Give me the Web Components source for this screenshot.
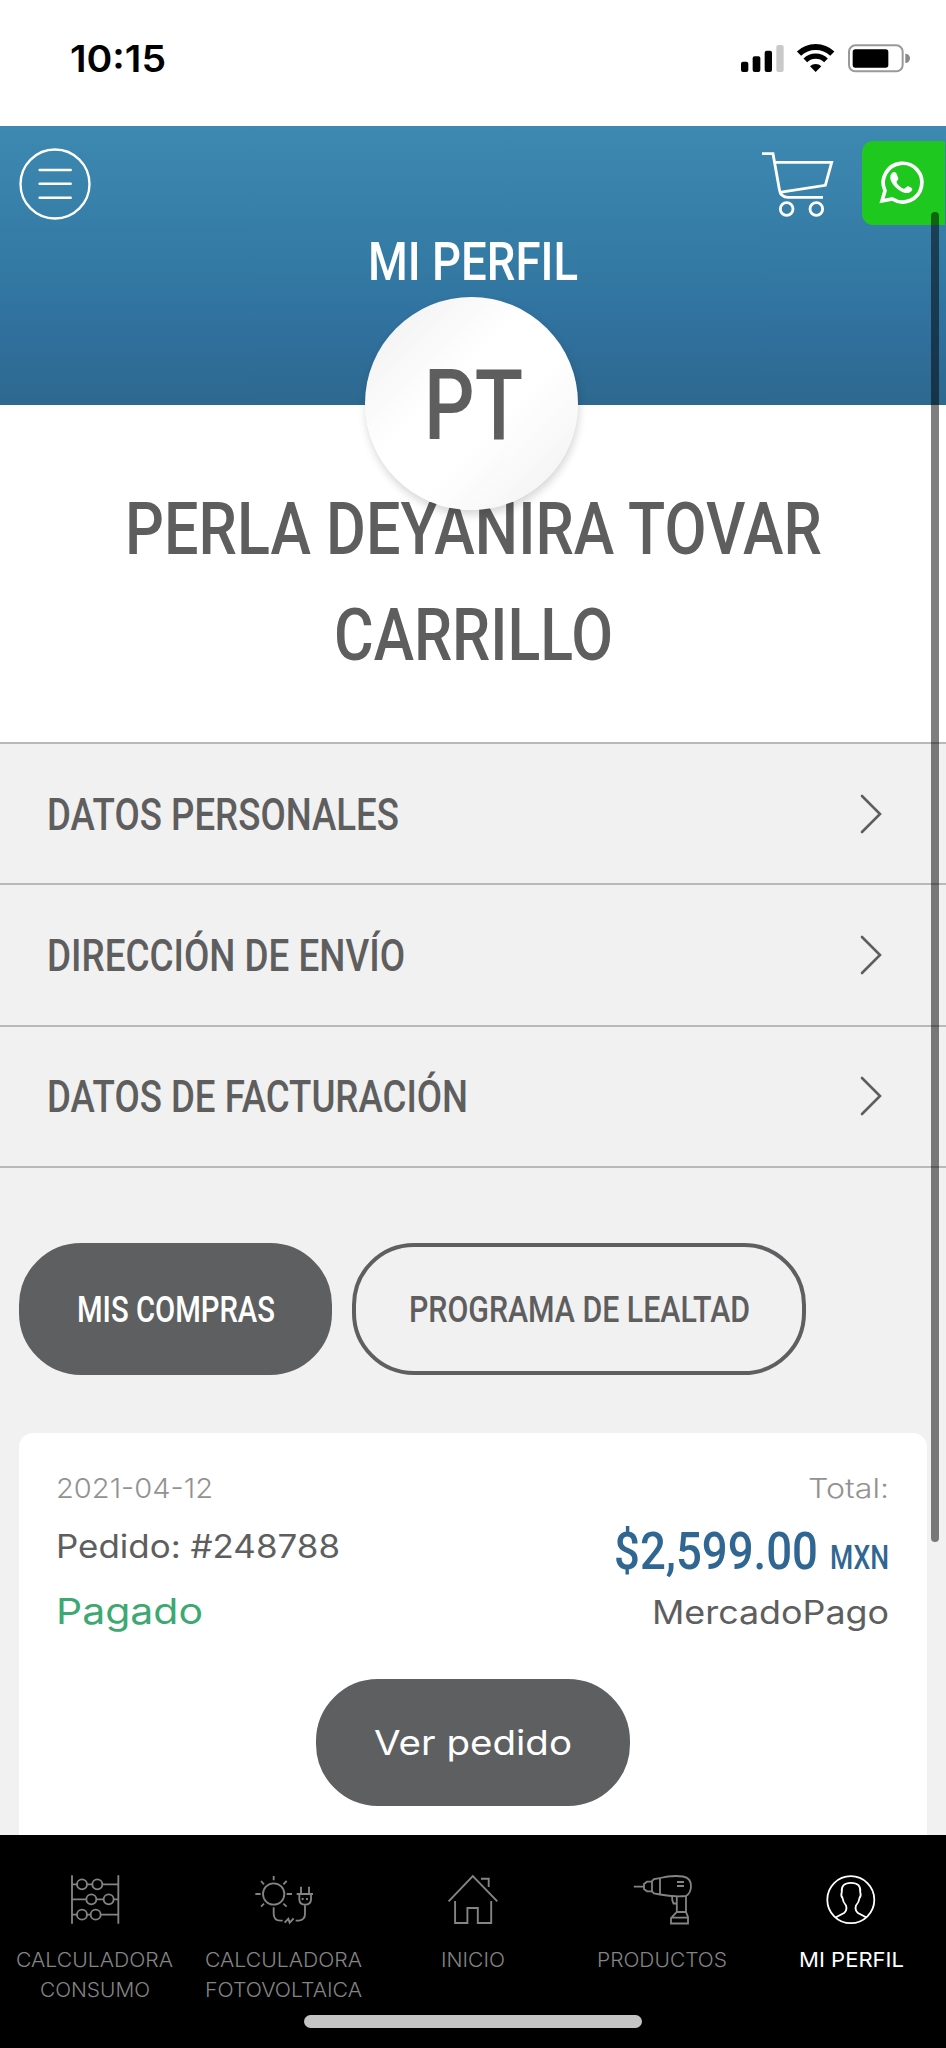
<!DOCTYPE html>
<html lang="es">
<head>
<meta charset="utf-8">
<title>Mi perfil</title>
<style>
    body {
        margin: 0;
        background: #f1f1f1;
        font-family: Inter, "Liberation Sans", sans-serif;
    }
</style>
</head>
<body>
<profile-app></profile-app>

<script>
class BaseElement extends HTMLElement {
    constructor() {
        super();
        this.$shadow = this.attachShadow({ mode: 'open' });
    }

    connectedCallback() {
        this.$shadow.innerHTML = `<style>${this.getStyle()}</style>${this.render()}`;
    }
}

// One line of text, condensed or widened to the given width
class FitText extends BaseElement {
    connectedCallback() {
        super.connectedCallback();
        const span = this.$shadow.querySelector('span');
        const width = Number(this.getAttribute('width'));
        const scale = width / span.getBoundingClientRect().width;
        span.style.transform = `scaleX(${scale})`;
    }

    getStyle() {
        return `
            :host {
                display: block;
                flex: none;
                width: ${this.getAttribute('width')}px;
                font-size: ${this.getAttribute('size')}px;
                line-height: 1;
                white-space: nowrap;
            }
            :host([title-font]) {
                font-family: Roboto, "Liberation Sans", sans-serif;
                font-weight: 500;
            }
            span {
                display: inline-block;
                vertical-align: top;
                transform-origin: 0 0;
            }
        `;
    }

    render() {
        return `<span><slot></slot></span>`;
    }
}

class StatusBar extends BaseElement {
    getStyle() {
        return `
            :host {
                display: flex;
                justify-content: space-between;
                align-items: flex-start;
                box-sizing: border-box;
                height: 126px;
                padding: 40px 35px 0 70px;
                background: #fff;
                color: #000;
                font-weight: 600;
            }
            svg { width: 172px; height: 32px; margin-top: 2px; }
        `;
    }

    render() {
        return `
            <fit-text size="37" width="96">10:15</fit-text>
            <svg viewBox="800 125 516 96">
                <rect x="806" y="184" width="22" height="31" rx="6"/>
                <rect x="841" y="168" width="23" height="47" rx="6"/>
                <rect x="877" y="151" width="22" height="64" rx="6"/>
                <rect x="912" y="134" width="22" height="81" rx="6" fill="#c9c9c9"/>
                <g fill="none" stroke="#000">
                    <path d="M980 160A72 72 0 0 1 1080 160" stroke-width="18"/>
                    <path d="M999 180A45 45 0 0 1 1061 180" stroke-width="16"/>
                </g>
                <path d="M1030 215L1013 198A24 24 0 0 1 1047 198Z"/>
                <rect x="1130" y="135" width="161" height="78" rx="19" fill="none" stroke="#999" stroke-width="6"/>
                <rect x="1141" y="147" width="107" height="55" rx="8"/>
                <path d="M1299 160A14 14 0 0 1 1299 188Z" fill="#888"/>
            </svg>
        `;
    }
}

class ProfileHeader extends BaseElement {
    getStyle() {
        return `
            :host {
                display: flex;
                flex-direction: column;
                align-items: center;
                position: relative;
                z-index: 1;
                box-sizing: border-box;
                height: 279px;
                padding-top: 15px;
                background: linear-gradient(#3d89b2, #3278a3 55%, #3172a0 68%, #2d688f);
                color: #fff;
            }
            nav {
                display: flex;
                align-items: flex-start;
                box-sizing: border-box;
                width: 100%;
                height: 94px;
                padding: 0 1px 0 19px;
            }
            nav svg { fill: none; stroke: #fff; stroke-linecap: round; }
            .menu { width: 72px; height: 72px; margin: 7px auto 0 0; }
            .cart { width: 74px; height: 68px; margin: 9px 28px 0 0; stroke-linecap: butt; }
            .whatsapp { width: 83px; height: 84px; border-radius: 11px 0 0 11px; background: #1ec81e; }
            .avatar {
                position: absolute;
                top: 171px;
                left: 365px;
                display: flex;
                align-items: center;
                justify-content: center;
                box-sizing: border-box;
                width: 213px;
                height: 213px;
                padding: 4px 0 0 4px;
                border-radius: 50%;
                background: linear-gradient(135deg, #f2f2f2 8%, #fff 40%, #fff 60%, #f2f2f2 95%);
                box-shadow: 1px 5px 8px rgba(0, 0, 0, .16);
                color: #5e5e5f;
            }
        `;
    }

    render() {
        return `
            <nav>
                <svg class="menu" viewBox="56 445 216 216" stroke-width="7">
                    <circle cx="164" cy="553" r="103.5"/>
                    <path d="M118 511H211M118 552H211M118 594H211" stroke-width="7.5"/>
                </svg>
                <svg class="cart" viewBox="861 450 222 204" stroke-width="8.5">
                    <path d="M867 461H900L919 568Q922 592 946 592H1050M905 487H1076L1057 556L920 577"/>
                    <circle cx="941" cy="627" r="19"/>
                    <circle cx="1030" cy="627" r="19"/>
                </svg>
                <svg class="whatsapp" viewBox="1169 423 249 252">
                    <path d="M1229 603L1238 572A58 58 0 1 1 1260 597Z" stroke-width="11" stroke-linejoin="miter"/>
                    <path d="M1257 521C1263 513 1271 516 1273 522L1278 535C1279 540 1271 544 1273 548C1278 556 1285 562 1294 566C1299 568 1302 557 1308 559L1318 564C1323 568 1317 577 1307 579C1291 581 1268 564 1259 548C1253 539 1252 529 1257 521Z" fill="#fff" stroke="none"/>
                </svg>
            </nav>
            <fit-text title-font size="54" width="210">MI PERFIL</fit-text>
            <div class="avatar"><fit-text title-font size="98" width="99">PT</fit-text></div>
        `;
    }
}

class ProfileName extends BaseElement {
    getStyle() {
        return `
            :host {
                display: flex;
                flex-direction: column;
                align-items: center;
                gap: 33px;
                box-sizing: border-box;
                height: 337px;
                padding-top: 88px;
                background: #fff;
                color: #5e5e5f;
            }
        `;
    }

    render() {
        return `
            <fit-text title-font size="73" width="697">PERLA DEYANIRA TOVAR</fit-text>
            <fit-text title-font size="73" width="279">CARRILLO</fit-text>
        `;
    }
}

class ProfileRow extends BaseElement {
    getStyle() {
        return `
            :host {
                display: flex;
                align-items: center;
                justify-content: space-between;
                box-sizing: border-box;
                height: 141.33px;
                padding: 0 63px 0 47px;
                border-top: 2px solid #b9b9b9;
                color: #5e5e5f;
            }
            :host(:last-of-type) { height: 143.33px; border-bottom: 2px solid #b9b9b9; }
            fit-text { padding-top: 2px; }
            svg { width: 24px; height: 40px; }
        `;
    }

    render() {
        return `
            <fit-text title-font size="44" width="${this.getAttribute('width')}">${this.getAttribute('name')}</fit-text>
            <svg viewBox="0 0 24 40" fill="none" stroke="#5e5e5f" stroke-width="2.6" stroke-linecap="round">
                <path d="M3 2L21 20L3 38"/>
            </svg>
        `;
    }
}

class PillButton extends BaseElement {
    getStyle() {
        return `
            :host {
                display: flex;
                align-items: center;
                justify-content: center;
                box-sizing: border-box;
                height: 132px;
                padding-top: 2px;
                border: 4px solid #5e5f61;
                border-radius: 62px;
                background: #5e5f61;
                color: #fff;
            }
            :host([outline]) { background: none; color: #5e5e5f; }
        `;
    }

    render() {
        return `<slot></slot>`;
    }
}

class OrderCard extends BaseElement {
    getStyle() {
        return `
            :host {
                display: block;
                box-sizing: border-box;
                height: 402px;
                margin: 58px 19px 0 19px;
                padding: 42px 38px 0 37px;
                border-radius: 14px 14px 0 0;
                background: #fff;
                color: #5e5e5f;
            }
            .info { display: flex; justify-content: space-between; height: 204px; }
            .left, .right { display: flex; flex-direction: column; }
            .right { align-items: flex-end; }
            .muted { color: #929292; font-weight: 300; }
            .order { margin-top: 29px; }
            .paid { margin-top: 30px; color: #3ea873; }
            .price { display: flex; align-items: flex-end; gap: 12px; margin-top: 24px; color: #2f6792; }
            .price fit-text + fit-text { margin-bottom: 3px; }
            .method { margin-top: 20px; }
            pill-button { width: 314px; height: 127px; margin: 0 auto; }
        `;
    }

    render() {
        return `
            <div class="info">
                <div class="left">
                    <fit-text class="muted" size="27" width="157">2021-04-12</fit-text>
                    <fit-text class="order" size="32" width="284">Pedido: #248788</fit-text>
                    <fit-text class="paid" size="36" width="147">Pagado</fit-text>
                </div>
                <div class="right">
                    <fit-text class="muted" size="27" width="81">Total:</fit-text>
                    <div class="price">
                        <fit-text title-font size="51" width="204">$2,599.00</fit-text>
                        <fit-text title-font size="33" width="59">MXN</fit-text>
                    </div>
                    <fit-text class="method" size="32" width="237">MercadoPago</fit-text>
                </div>
            </div>
            <pill-button><fit-text size="34" width="198">Ver pedido</fit-text></pill-button>
        `;
    }
}

class TabItem extends BaseElement {
    getStyle() {
        return `
            :host {
                display: flex;
                flex-direction: column;
                align-items: center;
                flex: 1 1 0;
                color: #848484;
                font-weight: 300;
            }
            :host([active]) { color: #fff; font-weight: 400; }
            ::slotted(svg) {
                width: 60px;
                height: 52px;
                margin-bottom: 25px;
                fill: none;
                stroke: currentColor;
            }
            ::slotted(fit-text) { margin-bottom: 10.5px; }
        `;
    }

    render() {
        return `<slot></slot>`;
    }
}

class TabBar extends BaseElement {
    getStyle() {
        return `
            :host {
                display: flex;
                flex-direction: column;
                align-items: center;
                box-sizing: border-box;
                height: 213px;
                padding-top: 38px;
                background: #000;
            }
            .tabs { display: flex; width: 100%; height: 142px; }
            .home { width: 338px; height: 13px; border-radius: 7px; background: #c4c4c4; }
        `;
    }

    render() {
        return `
            <div class="tabs">
                <tab-item>
                    <svg viewBox="194 129 180 156" stroke-width="5.5">
                        <path d="M215 136V281M354 136V281M215 163H230M260 163H276M306 163H354M215 208H258M288 208H310M340 208H354M215 254H230M260 254H271M301 254H354"/>
                        <circle cx="245" cy="163" r="15"/><circle cx="291" cy="163" r="15"/>
                        <circle cx="273" cy="208" r="15"/><circle cx="325" cy="208" r="15"/>
                        <circle cx="245" cy="254" r="15"/><circle cx="286" cy="254" r="15"/>
                    </svg>
                    <fit-text size="20" width="157">CALCULADORA</fit-text>
                    <fit-text size="20" width="110">CONSUMO</fit-text>
                </tab-item>
                <tab-item>
                    <svg viewBox="761 129 180 156" stroke-width="5.5">
                        <circle cx="820" cy="192" r="32"/>
                        <path d="M820 138V151M782 153L791 163M859 153L849 163M765 192H781M859 192H875M782 230L791 221M859 230L849 221"/>
                        <path d="M820 232V252Q821 272 840 272H847M853 278L864 266L868 278L880 265M886 272H895Q914 270 914 252V226"/>
                        <path d="M889 192H938M902 170V192M926 170V192M897 192V210Q899 224 914 224Q930 224 932 210V192M907 204V210M920 204V210"/>
                    </svg>
                    <fit-text size="20" width="157">CALCULADORA</fit-text>
                    <fit-text size="20" width="157">FOTOVOLTAICA</fit-text>
                </tab-item>
                <tab-item>
                    <svg viewBox="0 0 60 52" stroke-width="1.9">
                        <path d="M5.6 28.3L29.8 3L54.3 28.3M12.1 28V50H24.4V35H34.8V50H48.2V28M38 5.7H45.7V14"/>
                    </svg>
                    <fit-text size="20" width="64">INICIO</fit-text>
                </tab-item>
                <tab-item>
                    <svg viewBox="0 0 60 52" stroke-width="1.8">
                        <path d="M1.8 13.7H12M19.5 8.7H15L12 11V16L15 18.3H19.5M28 5.2L22 6L20 8V18.5L22 20.5L28 21.5M28 5V22"/>
                        <path d="M28 5Q40 2 51 3.5Q59 5 59 13Q59 20 54 23Q40 24 28 21.5M45 9H52M45 13H52"/>
                        <path d="M40 23Q40 28 41.5 30.5H44.5M44.8 23V39L39 45V50.5H56V44L54 39V23M44.8 39H54M39 44.7H56"/>
                    </svg>
                    <fit-text size="20" width="130">PRODUCTOS</fit-text>
                </tab-item>
                <tab-item active>
                    <svg viewBox="0 0 60 52" stroke-width="1.8">
                        <circle cx="29.8" cy="26.7" r="23.5"/>
                        <path d="M14.5 44.5L23 40Q26.5 37 25 32.5Q22 29 21.5 25Q19.5 23 20.8 19Q19.8 9.8 30 9.8Q40.2 9.8 39.2 19Q40.5 23 38.5 25Q38 29 35 32.5Q33.5 37 37 40L45.5 44.5"/>
                    </svg>
                    <fit-text size="20" width="105">MI PERFIL</fit-text>
                </tab-item>
            </div>
            <div class="home"></div>
        `;
    }
}

class ProfileApp extends BaseElement {
    getStyle() {
        return `
            :host {
                display: block;
                position: relative;
                width: 946px;
                height: 2048px;
                overflow: hidden;
            }
            .actions { display: flex; gap: 20px; padding: 75px 19px 0; }
            .actions pill-button:first-child { width: 313px; }
            .actions pill-button:last-child { width: 454px; }
            .scrollbar {
                position: absolute;
                z-index: 2;
                top: 212px;
                right: 7px;
                width: 8px;
                height: 1330px;
                border-radius: 4px;
                background: rgba(0, 0, 0, .5);
            }
        `;
    }

    render() {
        return `
            <status-bar></status-bar>
            <profile-header></profile-header>
            <profile-name></profile-name>
            <section>
                <profile-row name="DATOS PERSONALES" width="352"></profile-row>
                <profile-row name="DIRECCIÓN DE ENVÍO" width="358"></profile-row>
                <profile-row name="DATOS DE FACTURACIÓN" width="421"></profile-row>
            </section>
            <div class="actions">
                <pill-button><fit-text title-font size="36" width="198">MIS COMPRAS</fit-text></pill-button>
                <pill-button outline><fit-text title-font size="36" width="341">PROGRAMA DE LEALTAD</fit-text></pill-button>
            </div>
            <order-card></order-card>
            <tab-bar></tab-bar>
            <div class="scrollbar"></div>
        `;
    }
}

window.customElements.define('fit-text', FitText);
window.customElements.define('status-bar', StatusBar);
window.customElements.define('profile-header', ProfileHeader);
window.customElements.define('profile-name', ProfileName);
window.customElements.define('profile-row', ProfileRow);
window.customElements.define('pill-button', PillButton);
window.customElements.define('order-card', OrderCard);
window.customElements.define('tab-item', TabItem);
window.customElements.define('tab-bar', TabBar);
window.customElements.define('profile-app', ProfileApp);
</script>
</body>
</html>
